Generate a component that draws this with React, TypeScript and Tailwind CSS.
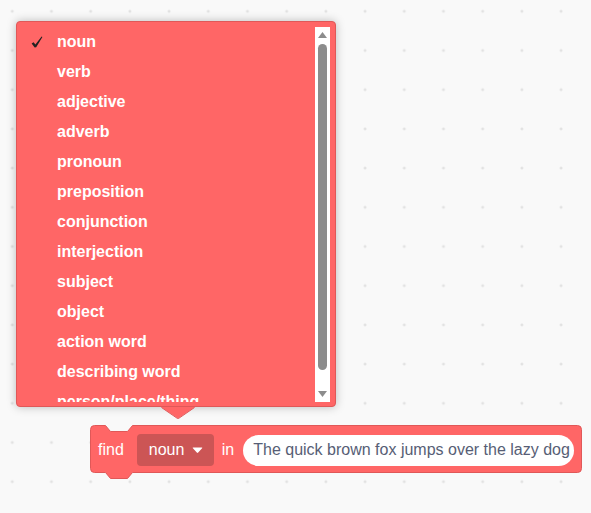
import React from 'react';

const words = [
  'noun',
  'verb',
  'adjective',
  'adverb',
  'pronoun',
  'preposition',
  'conjunction',
  'interjection',
  'subject',
  'object',
  'action word',
  'describing word',
  'person/place/thing',
];

const GridDots: React.FC = () => (
  <svg className="absolute inset-0" width="591" height="513">
    <defs>
      <pattern id="dots" x="12.3" y="11.3" width="39.2" height="39.2" patternUnits="userSpaceOnUse">
        <path d="M0 -1.5 V1.5 M-1.5 0 H1.5" stroke="#dadada" strokeWidth="1" />
        <path d="M39.2 -1.5 V1.5 M37.7 0 H40.7" stroke="#dadada" strokeWidth="1" />
        <path d="M0 37.7 V40.7 M-1.5 39.2 H1.5" stroke="#dadada" strokeWidth="1" />
        <path d="M39.2 37.7 V40.7 M37.7 39.2 H40.7" stroke="#dadada" strokeWidth="1" />
      </pattern>
    </defs>
    <rect width="591" height="513" fill="url(#dots)" />
  </svg>
);

const Check: React.FC = () => (
  <svg width="12" height="12" viewBox="0 0 12 12">
    <path d="M0.6 7.4 L2.6 6.3 L4.4 8.6 L10.6 0.4 L11.4 0.9 L5.2 11.2 L3.7 11.4 Z" fill="#222222" />
  </svg>
);

const WordMenu: React.FC = () => (
  <div className="absolute left-[16px] top-[21px] w-[320px] h-[386px] flex rounded-[4px] border border-[#e05858] bg-[#ff6666] pt-[5px] pb-[4px] pl-[12px] pr-[5px] shadow-[0_0_10px_rgba(0,0,0,0.25)]">
    <div className="flex-1 overflow-hidden">
      {words.map((w, i) => (
        <div key={w} className="flex h-[30px] items-center">
          <span className="flex w-[28px] pl-[2px]">{i === 0 && <Check />}</span>
          <span className="text-[16px] font-bold text-white">{w}</span>
        </div>
      ))}
    </div>
    <div className="flex w-[15px] flex-col items-center bg-white pt-[5px]">
      <svg width="9" height="6" viewBox="0 0 9 6">
        <polygon points="4.5,0 9,6 0,6" fill="#8c8c8c" />
      </svg>
      <div className="mt-[6px] h-[326px] w-[9px] rounded-full bg-[#8c8c8c]" />
      <svg className="mt-[21px]" width="9" height="6" viewBox="0 0 9 6">
        <polygon points="0,0 9,0 4.5,6" fill="#8c8c8c" />
      </svg>
    </div>
  </div>
);

const FindBlock: React.FC = () => (
  <div className="absolute left-[90px] top-[425px] w-[492px] h-[55px]">
    <svg className="absolute inset-0" width="492" height="55">
      <path
        d="M0.5 4.5 A4 4 0 0 1 4.5 0.5 H15.5 L20.5 6.5 H37.5 L42.5 0.5 H487.5 A4 4 0 0 1 491.5 4.5 V43.5 A4 4 0 0 1 487.5 47.5 H42.5 L37.5 53.5 H20.5 L15.5 47.5 H4.5 A4 4 0 0 1 0.5 43.5 Z"
        fill="#ff6666"
        stroke="#e05858"
      />
    </svg>
    <div className="relative mt-[1px] flex h-[48px] items-center pl-[8px] text-[16px] text-white">
      <span>find</span>
      <div className="ml-[13px] flex h-[32px] w-[77px] items-center rounded-[4px] bg-[#cc5555] pl-[12px]">
        <span>noun</span>
        <svg className="ml-[8px]" width="11" height="7" viewBox="0 0 11 7">
          <path d="M1.2 0.5 H9.8 Q10.8 0.5 10.1 1.3 L6.2 5.6 Q5.5 6.4 4.8 5.6 L0.9 1.3 Q0.2 0.5 1.2 0.5 Z" fill="#ffffff" />
        </svg>
      </div>
      <span className="ml-[8px]">in</span>
      <div className="ml-[9px] flex h-[31px] w-[331px] items-center rounded-full bg-white pl-[10px] text-[#575e75]">
        The quick brown fox jumps over the lazy dog
      </div>
    </div>
  </div>
);

export default function App() {
  return (
    <div className="relative h-[513px] w-[591px] overflow-hidden bg-[#f9f9f9] font-['Liberation_Sans',Arial,sans-serif]">
      <GridDots />
      <FindBlock />
      <WordMenu />
      <svg className="absolute left-[160px] top-[405px]" width="36" height="15">
        <polygon points="1,2 35,2 18,13.5" fill="#ff6666" />
        <polyline points="1.5,2.5 17.5,13.5 18.5,13.5 34.5,2.5" fill="none" stroke="#e05858" />
      </svg>
    </div>
  );
}
